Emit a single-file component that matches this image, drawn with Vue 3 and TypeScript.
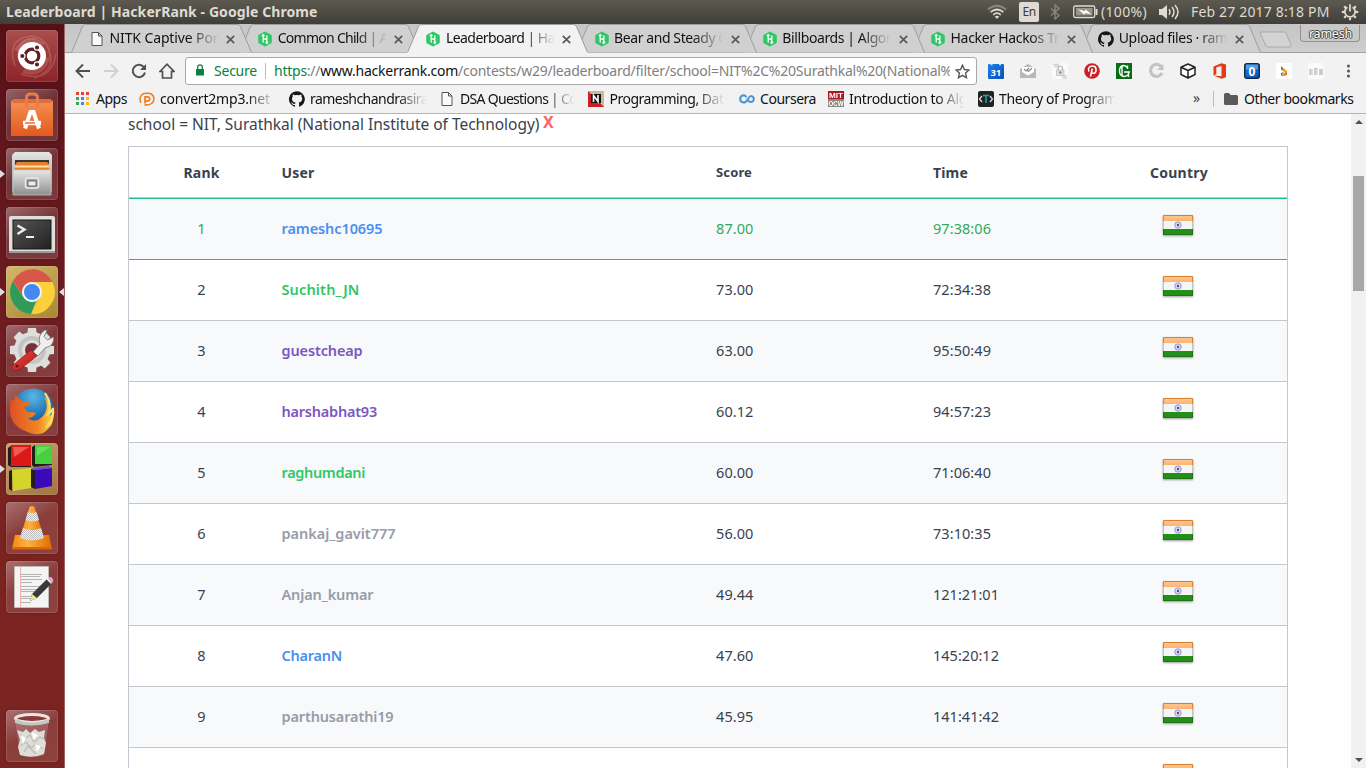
<script setup lang="ts">
interface Tab { title: string; width: number; icon: 'page' | 'hr' | 'github'; active?: boolean }
interface Row { rank: number; user: string; width: number; tone: string; score: string; time: string; timeWidth: number }

// Spreads letter spacing so that a label takes up the given width in pixels.
const vFit = {
  mounted(el: HTMLElement, binding: { value: number }) {
    const natural = el.getBoundingClientRect().width
    const count = (el.textContent ?? '').length
    if (count > 0) el.style.letterSpacing = `${(binding.value - natural) / count}px`
  },
}

const tabs: Tab[] = [
  { title: 'NITK Captive Por', width: 109, icon: 'page' },
  { title: 'Common Child | A', width: 110, icon: 'hr' },
  { title: 'Leaderboard | Ha', width: 109, icon: 'hr', active: true },
  { title: 'Bear and Steady G', width: 114, icon: 'hr' },
  { title: 'Billboards | Algor', width: 109, icon: 'hr' },
  { title: 'Hacker Hackos Tr', width: 109, icon: 'hr' },
  { title: 'Upload files · ram', width: 109, icon: 'github' },
]

const rows: Row[] = [
  { rank: 1, user: 'rameshc10695', width: 101, tone: 'blue', score: '87.00', time: '97:38:06', timeWidth: 58 },
  { rank: 2, user: 'Suchith_JN', width: 78, tone: 'green', score: '73.00', time: '72:34:38', timeWidth: 58 },
  { rank: 3, user: 'guestcheap', width: 81, tone: 'violet', score: '63.00', time: '95:50:49', timeWidth: 58 },
  { rank: 4, user: 'harshabhat93', width: 95.500, tone: 'violet', score: '60.12', time: '94:57:23', timeWidth: 58 },
  { rank: 5, user: 'raghumdani', width: 83.500, tone: 'green', score: '60.00', time: '71:06:40', timeWidth: 58 },
  { rank: 6, user: 'pankaj_gavit777', width: 114, tone: 'gray', score: '56.00', time: '73:10:35', timeWidth: 58 },
  { rank: 7, user: 'Anjan_kumar', width: 92, tone: 'gray', score: '49.44', time: '121:21:01', timeWidth: 66 },
  { rank: 8, user: 'CharanN', width: 60.500, tone: 'blue', score: '47.60', time: '145:20:12', timeWidth: 66 },
  { rank: 9, user: 'parthusarathi19', width: 112, tone: 'gray', score: '45.95', time: '141:41:42', timeWidth: 66 },
  { rank: 10, user: '', width: 0, tone: 'gray', score: '', time: '', timeWidth: 0 },
]

const launcher = ['dash', 'software', 'files', 'terminal', 'chrome', 'settings', 'firefox', 'blocks', 'vlc', 'editor', 'trash']
const running = ['files', 'chrome', 'blocks']
const dots = [0, 1, 2, 3, 4, 5, 6, 7, 8]
const appColors = ['#ea4335', '#ea4335', '#ea4335', '#34a853', '#4285f4', '#fbbc05', '#34a853', '#4285f4', '#fbbc05']
const angles = [0, 45, 90, 135, 180, 225, 270, 315]
</script>

<template>
  <div class="desktop">
    <svg class="defs" width="0" height="0">
      <defs>
        <linearGradient id="metal" x1="0" y1="0" x2="0" y2="1"><stop offset="0" stop-color="#e6e6e4" /><stop offset="1" stop-color="#8e8e8c" /></linearGradient>
        <linearGradient id="orange" x1="0" y1="0" x2="0" y2="1"><stop offset="0" stop-color="#f49256" /><stop offset="1" stop-color="#e35a1c" /></linearGradient>
        <linearGradient id="screen" x1="0" y1="0" x2="1" y2="1"><stop offset="0" stop-color="#555" /><stop offset="1" stop-color="#222" /></linearGradient>
        <linearGradient id="cone" x1="0" y1="0" x2="1" y2="0"><stop offset="0" stop-color="#f48a10" /><stop offset=".4" stop-color="#ffb040" /><stop offset="1" stop-color="#e06a00" /></linearGradient>
        <radialGradient id="globe" cx=".5" cy=".2" r=".8"><stop offset="0" stop-color="#58b8e4" /><stop offset=".6" stop-color="#2070b4" /><stop offset="1" stop-color="#123f7c" /></radialGradient>
        <linearGradient id="fox" x1="0" y1="0" x2="1" y2="0"><stop offset="0" stop-color="#df5024" /><stop offset=".65" stop-color="#f08522" /><stop offset="1" stop-color="#ffdc45" /></linearGradient>
        <linearGradient id="saffron" x1="0" y1="0" x2="0" y2="1"><stop offset="0" stop-color="#ffc894" /><stop offset="1" stop-color="#fbb06c" /></linearGradient>
        <linearGradient id="cal" x1="0" y1="0" x2="1" y2="1"><stop offset="0" stop-color="#1a80e8" /><stop offset="1" stop-color="#0a4fb8" /></linearGradient>
        <linearGradient id="red" x1="0" y1="0" x2="1" y2="1"><stop offset="0" stop-color="#e84a42" /><stop offset="1" stop-color="#b81414" /></linearGradient>
        <pattern id="mesh" width="2" height="2" patternUnits="userSpaceOnUse"><rect width="2" height="2" fill="#f2f2f2" /><path d="M0 0h1v1H0zM1 1h1v1H1z" fill="#bcbcbc" /></pattern>
      </defs>
    </svg>

    <header class="panel">
      <b v-fit="311.500">Leaderboard | HackerRank - Google Chrome</b>
      <div class="indicators">
        <svg class="wifi" width="20" height="16" viewBox="0 0 20 16" fill="none" stroke="#dfdbd2" stroke-width="1.7"><path d="M1 5.5q9-7.5 18 0" stroke="#8a877f" /><path d="M3.6 8.2q6.4-5.4 12.8 0M6.2 10.8q3.8-3.2 7.6 0" /><path d="M7.8 12.6q2.2-1.900 4.400 0L10 15z" fill="#dfdbd2" stroke="none" /></svg>
        <span class="lang"><span v-fit="13">En</span></span>
        <svg class="bt" width="10" height="16" viewBox="0 0 10 16" fill="none" stroke="#8c8980" stroke-width="1.3"><path d="M1 4.5l8 7L5 15V1l4 3.5-8 7" /></svg>
        <svg class="battery" width="25" height="14" viewBox="0 0 25 14"><rect x=".7" y="1" width="21" height="11.5" rx="1.5" fill="none" stroke="#dfdbd2" stroke-width="1.3" /><path d="M3 3h16.5v7.5H3z" fill="#98958d" /><path d="M22.5 4h2v6h-2z" fill="#dfdbd2" /><path d="M5 4.2l7 2 .5-2 6 5.3-6-1.5-1 1.8z" fill="#fff" /></svg>
        <span v-fit="46">(100%)</span>
        <svg class="sound" width="20" height="16" viewBox="0 0 20 16"><path d="M0 5h3l5-4v14l-5-4H0z" fill="#dfdbd2" /><path d="M10 5.2q2 2.8 0 5.6M13 3q4 5 0 10M16 1q6 7 0 14" fill="none" stroke="#dfdbd2" stroke-width="1.5" /></svg>
        <span class="clock"><span v-fit="138.500">Feb 27 2017  8:18 PM</span></span>
        <svg width="18" height="18" viewBox="0 0 18 18"><g fill="none" stroke="#dfdbd2"><path d="M6.400 4.200a5.200 5.200 0 1 0 5.200 0" stroke-width="1.8" /><path d="M9 1.200v7.300" stroke-width="1.8" /><path v-for="a in angles.slice(1)" :key="a" :transform="`rotate(${a} 9 9)`" d="M9 .8v2.4" stroke-width="2.2" /></g></svg>
      </div>
    </header>

    <div class="body">
      <aside class="dock">
        <div v-for="app in launcher" :key="app" class="tile" :class="app">
          <i v-if="running.includes(app)" class="arrow" />
          <i v-if="app === 'chrome'" class="arrow right" />
          <svg width="52" height="52" viewBox="0 0 52 52">
            <template v-if="app === 'dash'">
              <g fill="none" stroke="#edb0a8" opacity=".25" stroke-width="1.500"><path d="M9 36Q-1 8 27 6q17 4 17 22M15 44q30 10 35-20M12 28Q12 6 30 9M40 14q14 25-12 34" /></g><path d="M8 20Q20 0 39 13L26 26zM44 28q-6 22-28 15l10-16z" fill="#de8f83" opacity=".3" />
              <circle cx="26" cy="26" r="14" fill="#fff" /><circle cx="26" cy="26" r="6.8" fill="none" stroke="#651e23" stroke-width="3.2" /><g fill="#651e23" stroke="#fff" stroke-width="1.2"><circle cx="16.3" cy="26" r="2.7" /><circle cx="31" cy="17.5" r="2.7" /><circle cx="31" cy="34.5" r="2.7" /></g>
            </template>
            <template v-else-if="app === 'software'">
              <path d="M5 12l3-2h36l3 2v35H5z" fill="url(#orange)" /><path d="M5 12l3-2h36l3 2-2 2H7z" fill="#c9521b" opacity=".5" /><path d="M20.5 18V9q0-4 4-4h3q4 0 4 4v9" fill="none" stroke="#e87c49" stroke-width="3" /><path d="M19 39.500l5.500-16.500h3L33 39.500" fill="none" stroke="#fff" stroke-width="4" /><path d="M17 34h18" stroke="#fff" stroke-width="4.400" /><path d="M19 34h10" stroke="#ef7838" stroke-width="1.6" />
            </template>
            <template v-else-if="app === 'files'">
              <path d="M6 7l3-3h34l3 3v37H6z" fill="url(#metal)" /><path d="M9 12h34v12H9z" fill="#353535" /><path d="M9 17l2-3h30l2 2v8H9z" fill="#e6812a" /><path d="M9 17.500h34v2H9z" fill="#ffe2b0" /><path d="M7 22h38v25H7z" fill="url(#metal)" stroke="#c5c5c5" stroke-width=".8" /><rect x="19.5" y="30" width="13" height="10" rx="2" fill="#a3a3a3" stroke="#eee" stroke-width="1.5" /><path d="M22 33h8v5h-8z" fill="#eee" stroke="#666" />
            </template>
            <template v-else-if="app === 'terminal'">
              <rect x="3" y="9" width="46" height="37" rx="2" fill="#dededc" /><path d="M3 44h46v2H3z" fill="#9b9b99" /><rect x="7" y="13" width="38" height="29" fill="url(#screen)" stroke="#161616" /><path d="M11.5 18.500l7 4-7 4.500" fill="none" stroke="#eee" stroke-width="2.4" /><path d="M20 30h8" stroke="#eee" stroke-width="2" />
            </template>
            <template v-else-if="app === 'chrome'">
              <circle cx="26" cy="26" r="22" fill="#e8b93d" /><path d="M26 16h20.400A22 22 0 0 1 25 48l9.700-17z" fill="#fdcf38" /><path d="M7 15l10.300 16A10 10 0 0 0 30 35L25 48A22 22 0 0 1 7 15z" fill="#2f9b5a" /><path d="M7 15a22 22 0 0 1 39.400 1H26a10 10 0 0 0-9 14z" fill="#d9564a" /><circle cx="26" cy="26" r="10" fill="#f4f4f4" /><circle cx="26" cy="26" r="8" fill="#4688f1" />
            </template>
            <template v-else-if="app === 'settings'">
              <g fill="#dededc"><circle cx="26" cy="25" r="18" /><path v-for="a in angles" :key="a" :transform="`rotate(${a} 26 25)`" d="M22 3h8l1 8H21z" /></g><circle cx="26" cy="25" r="12" fill="none" stroke="#c4c4c2" stroke-width="4" /><circle cx="26" cy="25" r="7" fill="#78313a" /><path d="M27 27l7-8q-3-9 5-14l2 .500-3 6 3.500 3.500 6-3q1 9-8.500 11l-7 8z" fill="#eee" stroke="#888" /><path d="M25 25l6 6-18 14q-6 2-7-4z" fill="url(#red)" stroke="#991111" stroke-width=".7" /><circle cx="11" cy="41" r="1.5" fill="#701010" />
            </template>
            <template v-else-if="app === 'firefox'">
              <circle cx="27" cy="25" r="20.5" fill="url(#globe)" /><path d="M5 15l3 2 1-6 7 6 8 1q0 4-6 5 2 6 8 5l4 1q-3 5-8 5 7 6 15-2 7-9 1-20 9 8 6 20 3-3 2-7 4 13-4 20Q34 55 17 46 0 38 5 15z" fill="url(#fox)" /><path d="M39 9q8 12 3 21 4-2 5-6 2 11-7 19" fill="none" stroke="#ffe36a" stroke-width="2" />
            </template>
            <template v-else-if="app === 'blocks'">
              <path d="M2 5l4-3h19v22H5l-3-2zM26 4l3-2h17v20l-18 2-2-2zM3 28l3-1v21l-3-2zM24 26l5 1v19l-4-2z" fill="#241d18" /><path d="M5 2h20v21H5z" fill="#dd1818" /><path d="M7 4h16L8 14z" fill="#ff9a90" opacity=".5" /><path d="M29 2h17v19H29z" fill="#45d13d" /><path d="M31 4h13L31 13z" fill="#a0f09a" opacity=".4" /><path d="M6 27l19-2v20L7 48z" fill="#d4d52c" /><path d="M29 27l17-2v18l-17 3z" fill="#3b0ab8" /><path d="M26 25l17-2 3 2-17 2z" fill="#6b4ae0" />
            </template>
            <template v-else-if="app === 'vlc'">
              <path d="M9 33h34l3 14H6z" fill="url(#cone)" /><path d="M6 45h40v2.500H6z" fill="#d76808" /><path d="M23.500 5q2.500-2 5 0L38 36q-12 5-24 0z" fill="url(#cone)" /><path d="M21.800 10q4.700 2 8.700 0l2.500 8q-7 3-13.500 0zM17 26q9 4 18 0l3 10q-12 5-24 0z" fill="url(#mesh)" />
            </template>
            <template v-else-if="app === 'editor'">
              <path d="M8.500 5.500h34v41h-34z" fill="#f4f4f2" stroke="#bdbdb9" /><path d="M14.500 6v40" stroke="#f0b0b0" /><path d="M15 13.500h21M15 15.500h19M15 18.500h21M15 21.500h11M15 25.500h21M15 28.500h18M15 30.500h20M15 35.500h16M15 37.500h12M15 41.500h10" stroke="#b4b4b4" stroke-width="1" /><path d="M24 40l2-7 15-15 5 4-15 15z" fill="#363a38" /><path d="M24 40l2-7 5 4z" fill="#f0e390" /><path d="M40 18l3-2 4 4-2 3z" fill="#eee" /><path d="M42 17l3-1q3 2 2 5l-2 1z" fill="#e9a4cf" />
            </template>
            <template v-else>
              <path d="M9 9h34l-5 36q-12 4-24 0z" fill="#d9b6b5" opacity=".28" /><path d="M11 20l6 2 3-3 4 4 5-4 4 3 6-2-1 8 2 5-2 11q-12 5-24 1l-2-8 2-7z" fill="#deded9" /><path d="M14 24l5 5 5-4 4 7 6-5 4 2M14 36l6-4 5 6 5-4 7 5M18 42l4-6 8 8" fill="none" stroke="#bcbcb7" stroke-width="1.2" /><path d="M15 25l5 3-3 6zM26 22l6 3-5 5zM29 34l6 2-4 6z" fill="#fff" /><ellipse cx="26" cy="8.500" rx="16.500" ry="4" fill="#8c3938" stroke="#e6e6e2" stroke-width="3" /><path d="M9 9v4q16 5 34 0V9q-17 7-34 0" fill="#c6c6c1" />
            </template>
          </svg>
        </div>
      </aside>

      <main class="browser">
        <div class="strip">
          <div v-for="(tab, i) in tabs" :key="tab.title" class="tab" :class="{ active: tab.active }" :style="{ zIndex: tab.active ? 20 : 10 - i }">
            <svg class="shape" width="182" height="30" viewBox="0 0 182 30"><path d="M.5 28.500l11-26q1-2 3-2h152q2 0 3 2l11 26" :fill="tab.active ? '#f2f2f2' : '#d0d0d0'" stroke="#9c9c9c" /><path v-if="tab.active" d="M.5 28h180v2H.5z" fill="#f2f2f2" /></svg>
            <span class="favicon">
              <svg v-if="tab.icon === 'page'" width="12" height="16" viewBox="0 0 12 16"><path d="M1 1.500h6.500L11 5v9.500H1zM7.500 1.500V5H11" fill="#fafafa" stroke="#555" /></svg>
              <svg v-else-if="tab.icon === 'hr'" width="16" height="16" viewBox="0 0 16 16"><path d="M8 .5l5.800 3.100q1 .6 1 1.700v5.400q0 1.100-1 1.700L8 15.500l-5.800-3.100q-1-.6-1-1.700V5.300q0-1.100 1-1.700z" fill="#2ec866" /><path d="M6.200 4v7.500M9.800 4.500V12M6 8h4M4.900 5L6.200 3.700 7.500 5M8.500 11l1.300 1.300 1.300-1.300" fill="none" stroke="#fff" stroke-width="1.300" /></svg>
              <svg v-else width="16" height="16" viewBox="0 0 16 16"><path d="M8 .2A8 8 0 0 0 5.500 15.800c.4.100.5-.2.500-.4v-1.500c-2.200.5-2.700-1-2.700-1-.4-.9-.9-1.200-.9-1.200-.7-.5.100-.5.100-.5.800.1 1.200.8 1.200.8.700 1.300 1.900.9 2.400.7.100-.5.300-.9.500-1.100-1.800-.2-3.600-.9-3.600-4 0-.9.300-1.600.8-2.100-.1-.2-.4-1 .1-2.100 0 0 .7-.2 2.200.8a7.600 7.600 0 0 1 4 0c1.500-1 2.200-.8 2.200-.8.500 1.100.2 1.900.1 2.100.5.600.8 1.300.8 2.100 0 3.100-1.900 3.800-3.700 4 .3.300.6.800.6 1.500v2.200c0 .2.100.5.500.4A8 8 0 0 0 8 .2z" fill="#181616" /></svg>
            </span>
            <span class="tab-title"><span v-fit="tab.width">{{ tab.title }}</span></span>
            <svg class="close" width="9" height="9" viewBox="0 0 9 9"><path d="M.8.8l7.400 7.400M8.200.8L.8 8.200" stroke="#5a5a5a" stroke-width="1.700" /></svg>
          </div>
          <svg class="newtab" width="34" height="18" viewBox="0 0 34 18"><path d="M3 1h21.500q2 0 3 2L32 14q.8 2-1.200 2H9.500q-2 0-3-2L1.500 3Q.8 1 3 1z" fill="#d3d3d3" stroke="#aaa" /></svg>
          <span class="profile"><span v-fit="43">ramesh</span></span>
        </div>

        <div class="toolbar">
          <div class="nav">
            <svg width="16" height="16" viewBox="0 0 16 16"><path d="M15 8H2M8 1.500L1.500 8 8 14.500" fill="none" stroke="#505050" stroke-width="1.900" /></svg>
            <svg width="16" height="16" viewBox="0 0 16 16"><path d="M1 8h13M8 1.500L14.500 8 8 14.500" fill="none" stroke="#d0d0d0" stroke-width="1.900" /></svg>
            <svg width="16" height="16" viewBox="0 0 16 16"><path d="M12.800 4A6.200 6.200 0 1 0 14 9.500" fill="none" stroke="#505050" stroke-width="2" /><path d="M15 1v6H9z" fill="#505050" /></svg>
            <svg width="16" height="16" viewBox="0 0 16 16"><path d="M1 8.500l7-7.300 7 7.300h-2.500v6.500h-9V8.500z" fill="none" stroke="#505050" stroke-width="1.700" /></svg>
          </div>
          <div class="address">
            <svg class="lock" width="8" height="12" viewBox="0 0 8 12"><path d="M0 5h8v6.500H0z" fill="#0b8043" /><path d="M1.700 5V3.200q0-2.300 2.300-2.300t2.300 2.300V5" fill="none" stroke="#0b8043" stroke-width="1.300" /></svg>
            <span class="secure"><span v-fit="43">Secure</span></span>
            <span class="url"><span v-fit="678">
              <em>https</em>://<strong>www.hackerrank.com</strong>/contests/w29/leaderboard/filter/school=NIT%2C%20Surathkal%20(National%</span></span>
            <svg class="star" width="15" height="15" viewBox="0 0 15 15"><path d="M7.500 1.200l1.900 4.300 4.600.5-3.400 3.100.9 4.600-4-2.300-4 2.300.9-4.600L1 6l4.600-.5z" fill="none" stroke="#555" stroke-width="1.400" /></svg>
          </div>
          <div class="extensions">
            <svg width="16" height="16" viewBox="0 0 16 16"><rect y="1" width="16" height="15" rx="1" fill="url(#cal)" /><path d="M2.500 1.500h2M11 1.500h2" stroke="#c7e4ff" stroke-width="1.500" /><text x="8" y="12.500" text-anchor="middle" class="day">31</text></svg>
            <svg width="16" height="16" viewBox="0 0 16 16"><path d="M0 6l8-5 8 5v9H0z" fill="#b8b8b8" /><path d="M2 4h12v5l-6 3.500L2 9z" fill="#fff" /><path d="M4 6l2 2 3-3M7 7l1.500 1.500L12 5" fill="none" stroke="#888" stroke-width="1.200" /></svg>
            <svg width="16" height="16" viewBox="0 0 16 16"><path d="M0 0h16v16H0z" fill="#fafafa" /><path d="M1 1.500h6M2 3.500h5M9 13h6M11 15h4" stroke="#d0d0d0" stroke-width="1.300" /><path d="M4.500 7h7.500v5.500H4.500z" fill="#ddd" stroke="#ccc" /><path d="M6 7V5q0-2 2.300-2t2.300 2v2" fill="none" stroke="#aaa" /><circle cx="8.300" cy="9.500" r="1.200" fill="#888" /></svg>
            <svg width="16" height="16" viewBox="0 0 16 16"><circle cx="8" cy="8" r="7.800" fill="#cb2027" /><path d="M5 8.500C3.300 5.500 5.500 3 8.300 3c5.300 0 4.300 7.300 1 7.300-1 0-1.600-.9-1.600-.9M8.400 5.500L6.500 13.500" fill="none" stroke="#fff" stroke-width="1.600" /></svg>
            <svg width="16" height="16" viewBox="0 0 16 16"><path d="M0 0h16v16H0z" fill="#096c17" /><path d="M11.500 2.500v3.500M11.500 5Q10 2.500 7.500 2.500 3.500 3 3.500 8t4.500 5.500q3 0 4-2M8 9h6M12.500 9v5M6 3v10" fill="none" stroke="#fff" stroke-width="1.400" /></svg>
            <svg width="16" height="16" viewBox="0 0 16 16"><path d="M13.500 4A6 6 0 1 0 14 10" fill="none" stroke="#c3c3c3" stroke-width="3.200" /><path d="M15.500 1v6H9z" fill="#c3c3c3" /></svg>
            <svg width="16" height="16" viewBox="0 0 16 16"><path d="M8 1l7 3.200v7.300L8 15l-7-3.500V4.200zM1 4.200L8 7.500l7-3.300M8 7.500V15" fill="#fff" stroke="#222" stroke-width="1.500" stroke-linejoin="round" /></svg>
            <svg width="16" height="16" viewBox="0 0 16 16"><path d="M1.500 3.500L9.500.3l4.500 1.300v12.700L9.500 15.700 1.500 12.500l8 .8V3L4.300 4.200v7l-2.800 1.300z" fill="#e43b10" /></svg>
            <svg width="16" height="16" viewBox="0 0 16 16"><rect x=".7" y=".7" width="14.600" height="14.600" rx="2" fill="url(#cal)" stroke="#122842" stroke-width="1.400" /><path d="M2 1.500h12v5H2z" fill="#7ec4f2" opacity=".55" /><text x="8" y="12.500" text-anchor="middle" class="zero">0</text></svg>
            <svg width="16" height="16" viewBox="0 0 16 16"><path d="M0 0h16v16H0z" fill="#fff" /><path d="M5 3l6 5-1 2-5-3z" fill="#f6a817" /><path d="M5 13l6-5v4l-4 1z" fill="#e67b1b" /><path d="M5 3l3 4-3-1zM5 13l3-4-3 1z" fill="#646e78" /></svg>
            <svg width="16" height="16" viewBox="0 0 16 16"><path d="M0 0h16v16H0z" fill="#fafafa" /><path d="M3 6v6M8 5v7M13 6v6" stroke="#c9c9c9" stroke-width="3.600" /><path d="M4 6v6M9 6v6" stroke="#eee" /></svg>
            <svg width="16" height="16" viewBox="0 0 16 16" fill="#555"><circle cx="8.500" cy="3" r="1.500" /><circle cx="8.500" cy="8" r="1.500" /><circle cx="8.500" cy="13" r="1.500" /></svg>
          </div>
        </div>

        <nav class="bookmarks">
          <div class="mark m1"><svg width="14" height="14" viewBox="0 0 14 14"><rect v-for="d in dots" :key="d" :x="(d % 3) * 5" :y="Math.floor(d / 3) * 5" width="3" height="3" :fill="appColors[d]" /></svg><span v-fit="31">Apps</span></div>
          <div class="mark m2 faded"><svg width="16" height="14" viewBox="0 0 16 14" fill="none" stroke="#ef7d22"><path d="M2 11Q-1 4 5 1.500 14.500-.2 15 7q-.5 5-6.500 6-2 0-3-.500" stroke-width="1.500" /><path d="M6 11.500V4.800h2.500q2.500.3 2.200 2.500-.5 1.900-2.700 1.900H6" stroke-width="1.700" /></svg><span v-fit="117.500">convert2mp3.net -</span></div>
          <div class="mark m3 faded"><svg width="16" height="16" viewBox="0 0 16 16"><path d="M8 .2A8 8 0 0 0 5.500 15.800c.4.100.5-.2.500-.4v-1.500c-2.200.5-2.700-1-2.700-1-.4-.9-.9-1.200-.9-1.200-.7-.5.100-.5.100-.5.800.1 1.200.8 1.200.8.700 1.300 1.900.9 2.400.7.100-.5.300-.9.500-1.100-1.800-.2-3.600-.9-3.600-4 0-.9.300-1.600.8-2.100-.1-.2-.4-1 .1-2.100 0 0 .7-.2 2.200.8a7.600 7.600 0 0 1 4 0c1.500-1 2.200-.8 2.200-.8.500 1.100.2 1.900.1 2.100.5.600.8 1.300.8 2.100 0 3.100-1.900 3.800-3.700 4 .3.300.6.800.6 1.500v2.200c0 .2.100.5.500.4A8 8 0 0 0 8 .2z" fill="#181616" /></svg><span v-fit="118">rameshchandrasira</span></div>
          <div class="mark m4 faded"><svg width="12" height="16" viewBox="0 0 12 16"><path d="M1 1.500h6.500L11 5v9.500H1zM7.500 1.500V5H11" fill="#fafafa" stroke="#555" /></svg><span v-fit="117">DSA Questions | Co</span></div>
          <div class="mark m5 faded"><svg width="16" height="16" viewBox="0 0 16 16"><path d="M0 0h16v16H0z" fill="#cdb996" /><path d="M0 0l16 16H0z" fill="#cc1f27" /><path d="M3 3h10v9H3z" fill="#111" /><path d="M5.500 11V4.500l4.500 6V4" fill="none" stroke="#fff" stroke-width="1.600" /></svg><span v-fit="114">Programming, Dat</span></div>
          <div class="mark m6"><svg width="16" height="10" viewBox="0 0 16 10"><path d="M7.500 3.200Q6.500 1.300 4.500 1.300 1.200 1.800 1.200 5t3.300 3.600Q7.200 8.600 9 5q1.500-3 3-3 2.800.3 2.800 3t-2.800 3Q10 8 9 6.500" fill="none" stroke="#4a95d2" stroke-width="2" /></svg><span v-fit="56">Coursera</span></div>
          <div class="mark m7 faded"><svg width="16" height="16" viewBox="0 0 16 16"><path d="M0 0h16v8H0z" fill="#aa1824" /><path d="M0 8h16v8H0z" fill="#8c8880" /><text x="1" y="6.800" textLength="14" lengthAdjust="spacingAndGlyphs" class="mit">MIT</text><text x=".5" y="14.800" textLength="15" lengthAdjust="spacingAndGlyphs" class="mit">OCW</text></svg><span v-fit="118">Introduction to Alg</span></div>
          <div class="mark m8 faded"><svg width="16" height="16" viewBox="0 0 16 16"><rect width="16" height="16" rx="2" fill="#202224" /><path d="M4 5L1.500 8 4 11M12 5l2.500 3-2.500 3" fill="none" stroke="#ddd" stroke-width="1.300" /><path d="M5 4.500h6M8 4.500V12" stroke="#18a6aa" stroke-width="1.500" /></svg><span v-fit="118">Theory of Program</span></div>
          <div class="overflow"><span v-fit="9">»</span></div>
          <div class="other"><svg width="14" height="12" viewBox="0 0 14 12"><path d="M0 1.500Q0 0 1.500 0H5l1.500 2h6Q14 2 14 3.500v7q0 1.500-1.500 1.500h-11Q0 12 0 10.500z" fill="#5a5a5a" /></svg><span v-fit="109.500">Other bookmarks</span></div>
        </nav>

        <div class="viewport">
          <div class="page">
            <p class="filter"><span v-fit="411.500">school = NIT, Surathkal (National Institute of Technology)</span><b>X</b></p>
            <div class="board">
              <div class="row head">
                <span class="rank"><span v-fit="36">Rank</span></span><span class="user"><span v-fit="33">User</span></span><span class="score"><span v-fit="36">Score</span></span><span class="time"><span v-fit="35">Time</span></span><span><span v-fit="58">Country</span></span>
              </div>
              <div v-for="row in rows" :key="row.rank" class="row" :class="{ me: row.rank === 1, shade: row.rank % 2 === 1 }">
                <span class="rank"><span v-if="row.rank < 10" v-fit="8.500">{{ row.rank }}</span></span>
                <span class="user" :class="row.tone"><span v-if="row.user" v-fit="row.width">{{ row.user }}</span></span>
                <span class="score"><span v-if="row.score" v-fit="37.500">{{ row.score }}</span></span>
                <span class="time"><span v-if="row.time" v-fit="row.timeWidth">{{ row.time }}</span></span>
                <svg class="flag" width="30" height="20" viewBox="0 0 30 20"><path d="M0 0h30v7H0z" fill="url(#saffron)" /><path d="M0 6h30v8H0z" fill="#f5f5f5" /><path d="M0 14h30v6H0z" fill="#229018" /><path d="M.5 6V.500h29V6" fill="none" stroke="#d8812f" /><path d="M.5 6v8M29.500 6v8" stroke="#c4c4c4" /><path d="M.5 14v5.500h29V14" fill="none" stroke="#22701a" /><circle cx="15" cy="10" r="3.200" fill="#dcdcf0" stroke="#9297cc" /><circle cx="15" cy="10" r="1.200" fill="#4549a8" /></svg>
              </div>
            </div>
          </div>
          <div class="scrollbar"><i class="up" /><i class="thumb" /><i class="down" /></div>
        </div>
      </main>
    </div>
  </div>
</template>

<style>
html, body { margin: 0; overflow: hidden; }
</style>

<style scoped>
.desktop { width: 1366px; height: 768px; overflow: hidden; font-family: "Noto Sans", "Open Sans", sans-serif; font-size: 14px; color: #111; white-space: pre; display: flex; flex-direction: column; }
.desktop svg { display: block; flex: none; }
.defs { position: absolute; }
.desktop span, .desktop b { flex: none; }
.desktop span > span { display: inline-block; }
.panel { height: 24px; flex: none; display: flex; align-items: center; justify-content: space-between; padding: 0 7px 0 6px; background: linear-gradient(#5c5a50, #3f3e3a); color: #dfdbd2; font-size: 14px; line-height: 22px; box-sizing: border-box; }
.indicators { display: flex; align-items: center; }
.lang { width: 20px; height: 20px; line-height: 20px; margin-left: 12px; border-radius: 2px; background: #dfdbd2; color: #3c3b37; text-align: center; font-size: 12px; }
.bt { margin-left: 11px; }
.battery { margin-left: 13px; margin-right: 3px; }
.sound { margin-left: 12px; }
.clock { margin: 0 11.500px 0 12px; }
.body { flex: 1; display: flex; min-height: 0; }
.dock { width: 65px; flex: none; box-sizing: border-box; padding: 6px; border-right: 1px solid #9e6563; background: linear-gradient(#561117 0, #6b1b20 260px, #7b2321 500px, #7b2421); display: flex; flex-direction: column; gap: 7px; }
.tile { position: relative; width: 52px; height: 52px; flex: none; border-radius: 4px; background: linear-gradient(150deg, rgba(255,255,255,.35), rgba(255,255,255,.12) 45%, rgba(255,255,255,.14)); box-shadow: inset 0 0 0 1px rgba(255,255,255,.12), 0 0 3px rgba(0,0,0,.22); }
.tile.dash { background: linear-gradient(#a94e4f, #8c2429); }
.tile.chrome { background: linear-gradient(145deg, #d4b76d, #a68733); }
.tile.blocks { background: linear-gradient(150deg, #caa070, #a37442); }
.tile.trash { margin-top: auto; }
.arrow { position: absolute; left: -6px; top: 22px; border-left: 5px solid #ddd; border-top: 4px solid transparent; border-bottom: 4px solid transparent; }
.arrow.right { left: auto; right: -6px; border-left: 0; border-right: 5px solid #ddd; }
.browser { flex: 1; min-width: 0; display: flex; flex-direction: column; background: #f2f2f2; }
.strip { height: 29px; flex: none; display: flex; padding-left: 6px; background: linear-gradient(#c5c5c5, #cecece); box-shadow: inset 0 -1px #a0a0a0; box-sizing: border-box; }
.tab { position: relative; width: 181px; height: 29px; margin-right: -12.8px; flex: none; display: flex; align-items: center; box-sizing: border-box; padding-left: 18px; }
.shape { position: absolute; left: 0; top: 0; }
.favicon { position: relative; width: 16px; display: flex; justify-content: center; }
.tab-title { position: relative; width: 109px; margin-left: 4.500px; overflow: hidden; line-height: 28px; height: 29px; mask-image: linear-gradient(90deg, #000 72%, transparent); }
.close { position: relative; margin-left: 7.500px; margin-top: 1px; }
.newtab { margin: 7px 0 0 11px; }
.profile { margin-left: 7px; margin-top: 1px; width: 58px; height: 16px; border: 1px solid #939393; border-top: 0; border-radius: 0 0 4px 4px; background: #c8c8c8; font-size: 12.500px; line-height: 18px; text-align: center; color: #fff; text-shadow: 1px 0 #444, -1px 0 #444, 0 1px #444, 0 -1px #444; }
.toolbar { height: 35px; flex: none; display: flex; align-items: center; padding-left: 10px; }
.nav { display: flex; gap: 12px; width: 110px; flex: none; }
.address { width: 792px; height: 28px; margin-top: 1px; flex: none; box-sizing: border-box; border: 1px solid #a9a9a9; border-radius: 3px; background: #fff; display: flex; align-items: center; padding-left: 10px; line-height: 26px; }
.lock { margin-bottom: 2px; }
.secure { color: #0b8043; margin-left: 10px; padding-right: 8px; line-height: 16px; border-right: 1px solid #bcbcbc; }
.url { width: 676px; margin-left: 8px; overflow: hidden; color: #808080; }
.url > span { white-space: nowrap; }
.url em { color: #0b8043; font-style: normal; }
.url strong { color: #111; font-weight: 400; }
.star { margin-left: 5px; }
.extensions { display: flex; gap: 16px; margin-left: 11px; }
.day { font: bold 9px "Noto Sans", sans-serif; fill: #fff; }
.zero { font: bold 12px "Noto Sans", sans-serif; fill: #fff; }
.mit { font: bold 8px "Liberation Sans", sans-serif; fill: #fff; }
.bookmarks { height: 26px; flex: none; box-sizing: border-box; border-bottom: 1px solid #b5b5b5; display: flex; line-height: 22px; padding-left: 11px; }
.mark { display: flex; align-items: center; gap: 6px; flex: none; height: 22px; overflow: hidden; }
.faded { mask-image: linear-gradient(90deg, #000 78%, transparent 99%); }
.m1 { width: 63px; }
.m2 { width: 138px; gap: 5px; margin-right: 12px; }
.m3 { width: 139px; margin-right: 13px; gap: 5px; }
.m4 { width: 135px; gap: 7px; margin-right: 12px; }
.m5 { width: 138px; margin-right: 13px; gap: 5.500px; }
.m6 { width: 89px; gap: 5px; }
.m7 { width: 138px; margin-right: 12px; gap: 5px; }
.m8 { width: 139px; gap: 5px; }
.overflow { margin-left: 76px; width: 20px; color: #444; border-right: 1px solid #bbb; height: 16px; line-height: 14px; margin-top: 3px; }
.overflow span { display: inline-block; }
.other { display: flex; gap: 6px; align-items: center; height: 22px; margin-left: 10px; }
.viewport { flex: 1; min-height: 0; display: flex; background: #fff; color: #39424e; }
.page { flex: 1; min-width: 0; overflow: hidden; padding-left: 63px; }
.filter { margin: 0; height: 32px; line-height: 20px; font-size: 15.500px; display: flex; }
.filter b { margin-left: 3.500px; color: #ff6464; font-size: 16px; line-height: 17px; }
.board { width: 1158px; border: 1px solid #c2c7d0; }
.row { display: flex; height: 60px; line-height: 59px; border-bottom: 1px solid #c2c7d0; font-size: 14.500px; }
.shade { background: #f8f9fb; }
.me { border-top: 1px solid #1fbe8b; border-bottom-color: #1fbe8b; color: #2eab5b; }
.rank { width: 145px; text-align: center; margin-right: 7.500px; }
.user { width: 434.500px; font-weight: 600; }
.score { width: 217px; }
.time { width: 217px; }
.head { height: 50px; line-height: 51px; font-weight: 700; font-size: 14px; }
.head .user { font-weight: 700; }
.head .score { font-size: 13px; line-height: 50px; }
.blue { color: #4a90ee; }
.green { color: #2ec866; }
.violet { color: #7d56c2; }
.gray { color: #969ca8; }
.flag { margin: 16px 0 0 13px; filter: drop-shadow(0 1px 1px rgba(0,0,0,.4)); }
.scrollbar { width: 15px; flex: none; background: #f1f1f1; display: flex; flex-direction: column; align-items: center; }
.up { margin-top: 6px; border: 4px solid transparent; border-top: 0; border-bottom-color: #505050; }
.thumb { width: 11px; height: 115px; margin-top: 52px; background: #a8a8a8; }
.down { margin: auto 0 6px; border: 4px solid transparent; border-bottom: 0; border-top-color: #505050; }
</style>
